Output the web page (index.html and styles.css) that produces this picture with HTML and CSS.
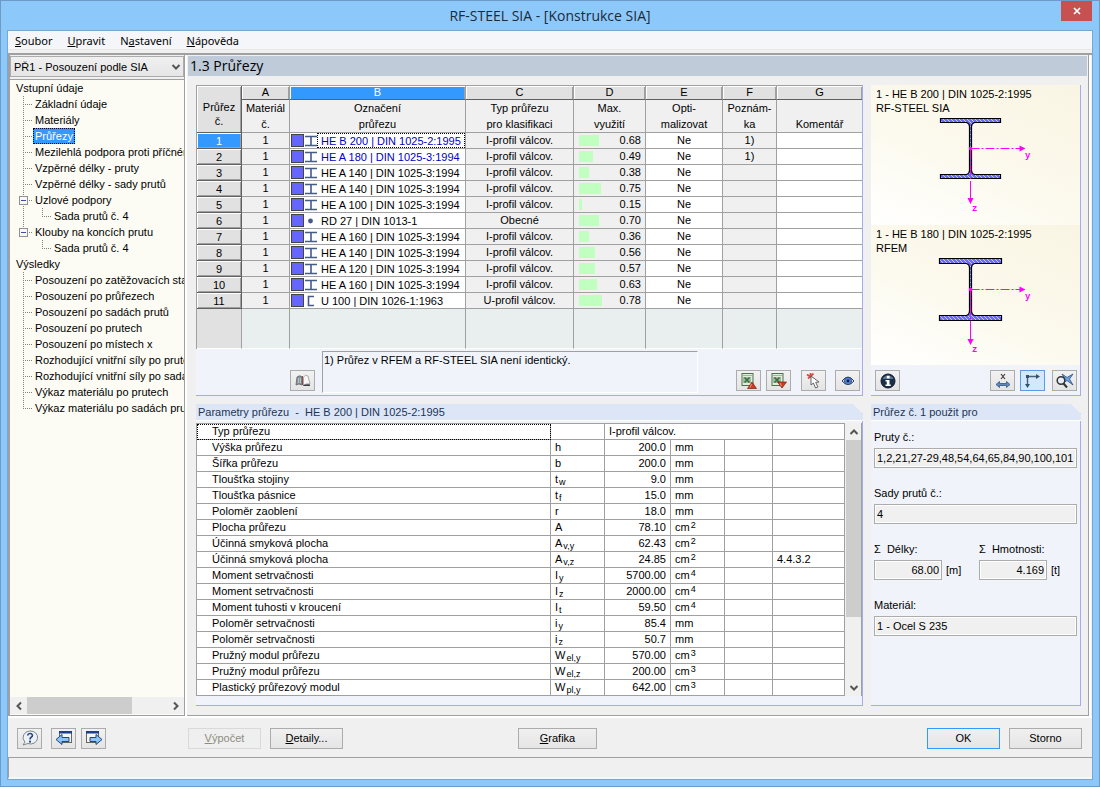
FILE: index.html
```html
<!DOCTYPE html>
<html lang="cs">
<head>
<meta charset="utf-8">
<title>RF-STEEL SIA - [Konstrukce SIA]</title>
<link rel="stylesheet" href="styles.css">
</head>
<body>
<svg class="defs" aria-hidden="true">
  <defs>
    <pattern id="hatch" width="4" height="4" patternUnits="userSpaceOnUse">
      <rect width="4" height="4" fill="#6a6aff"/>
      <path d="M-1 -1 L5 5 M-1 3 L1 5 M3 -1 L5 1" stroke="#c4c4ff" stroke-width="1"/>
    </pattern>
    <symbol id="sec-i" viewBox="0 0 12 12"><path d="M0 1.500h12M0 10.500h12M6 1v10" stroke="#465a8c" stroke-width="1.600" fill="none"/></symbol>
    <symbol id="sec-o" viewBox="0 0 12 12"><circle cx="5.500" cy="6" r="2.400" fill="#465a8c"/></symbol>
    <symbol id="sec-u" viewBox="0 0 12 12"><path d="M9 1.500H3.500V10.500H9" stroke="#465a8c" stroke-width="1.600" fill="none"/></symbol>
    <symbol id="chev-down" viewBox="0 0 10 10"><path d="M1.500 3l3.500 3.500L8.500 3" stroke="#555" stroke-width="2" fill="none"/></symbol>
    <symbol id="chev-up" viewBox="0 0 10 10"><path d="M1.500 7l3.500-3.500L8.500 7" stroke="#555" stroke-width="2" fill="none"/></symbol>
    <symbol id="chev-left" viewBox="0 0 10 10"><path d="M7 1.500L3.500 5L7 8.500" stroke="#555" stroke-width="2" fill="none"/></symbol>
    <symbol id="chev-right" viewBox="0 0 10 10"><path d="M3 1.500L6.500 5L3 8.500" stroke="#555" stroke-width="2" fill="none"/></symbol>
    <symbol id="excel" viewBox="0 0 16 16">
      <rect x="1" y="0.500" width="11" height="12" fill="#e2ecda" stroke="#4d7050"/>
      <path d="M2 2.500h9" stroke="#9dbb9d"/>
      <rect x="2" y="4" width="8" height="6" fill="#9dbd9c"/>
      <path d="M3.500 4.500l5 5M8.500 4.500l-5 5" stroke="#3c6b45" stroke-width="1.600"/>
    </symbol>
  </defs>
</svg>
<div class="window">
  <header class="titlebar">
    <h1 class="window-title">RF-STEEL SIA - [Konstrukce SIA]</h1>
    <button class="close" type="button" aria-label="Zavřít"><svg width="8" height="8" viewBox="0 0 8 8"><path d="M1 1l6 6M7 1l-6 6" stroke="#fff" stroke-width="1.700"/></svg></button>
  </header>
  <div class="client">
    <nav class="menu">
      <a href="#"><u>S</u>oubor</a><a href="#"><u>U</u>pravit</a><a href="#">N<u>a</u>stavení</a><a href="#"><u>N</u>ápověda</a>
    </nav>
    <main class="main">
      <aside class="side">
        <div class="case">
          <select aria-label="Zatěžovací případ"><option>PŘ1 - Posouzení podle SIA</option></select>
          <svg class="case-arrow" width="10" height="10"><use href="#chev-down"/></svg>
        </div>
        <div class="tree">
          <div class="root">Vstupní údaje</div>
          <ul>
            <li><a href="#">Základní údaje</a></li>
            <li><a href="#">Materiály</a></li>
            <li><a href="#" class="current">Průřezy</a></li>
            <li><a href="#">Mezilehlá podpora proti příčném</a></li>
            <li><a href="#">Vzpěrné délky - pruty</a></li>
            <li><a href="#">Vzpěrné délky - sady prutů</a></li>
            <li><button class="fold" type="button" aria-label="Sbalit"></button><a href="#">Uzlové podpory</a>
              <ul><li><a href="#">Sada prutů č. 4</a></li></ul></li>
            <li><button class="fold" type="button" aria-label="Sbalit"></button><a href="#">Klouby na koncích prutu</a>
              <ul><li><a href="#">Sada prutů č. 4</a></li></ul></li>
          </ul>
          <div class="root">Výsledky</div>
          <ul>
            <li><a href="#">Posouzení po zatěžovacích sta</a></li>
            <li><a href="#">Posouzení po průřezech</a></li>
            <li><a href="#">Posouzení po sadách prutů</a></li>
            <li><a href="#">Posouzení po prutech</a></li>
            <li><a href="#">Posouzení po místech x</a></li>
            <li><a href="#">Rozhodující vnitřní síly po prute</a></li>
            <li><a href="#">Rozhodující vnitřní síly po sada</a></li>
            <li><a href="#">Výkaz materiálu po prutech</a></li>
            <li><a href="#">Výkaz materiálu po sadách prut</a></li>
          </ul>
        </div>
        <div class="hscroll">
          <button type="button" aria-label="Doleva"><svg width="10" height="10"><use href="#chev-left"/></svg></button>
          <div class="track"><div class="thumb"></div></div>
          <button type="button" aria-label="Doprava"><svg width="10" height="10"><use href="#chev-right"/></svg></button>
        </div>
      </aside>
      <section class="content">
        <h2 class="page-title">1.3 Průřezy</h2>
        <div class="panels">
          <section class="panel sections">
            <table class="grid">
              <colgroup><col class="w-num"><col class="w-a"><col><col class="w-c"><col class="w-d"><col class="w-e"><col class="w-f"><col class="w-g"></colgroup>
              <thead>
                <tr class="letters"><th rowspan="2" class="corner">Průřez<br>č.</th><th>A</th><th class="active">B</th><th>C</th><th>D</th><th>E</th><th>F</th><th>G</th></tr>
                <tr class="names"><th>Materiál<br>č.</th><th>Označení<br>průřezu</th><th>Typ průřezu<br>pro klasifikaci</th><th>Max.<br>využití</th><th>Opti-<br>malizovat</th><th>Poznám-<br>ka</th><th>Komentář</th></tr>
              </thead>
              <tbody>
                <tr><th class="active">1</th><td>1</td><td class="desc blue focus"><div><i></i><svg><use href="#sec-i"/></svg><span>HE B 200 | DIN 1025-2:1995</span></div></td><td>I-profil válcov.</td><td class="use"><div><b style="width:20px"></b>0.68</div></td><td class="edit">Ne</td><td>1)</td><td class="edit"></td></tr>
                <tr><th>2</th><td>1</td><td class="desc blue"><div><i></i><svg><use href="#sec-i"/></svg><span>HE A 180 | DIN 1025-3:1994</span></div></td><td>I-profil válcov.</td><td class="use"><div><b style="width:14px"></b>0.49</div></td><td class="edit">Ne</td><td>1)</td><td class="edit"></td></tr>
                <tr><th>3</th><td>1</td><td class="desc"><div><i></i><svg><use href="#sec-i"/></svg><span>HE A 140 | DIN 1025-3:1994</span></div></td><td>I-profil válcov.</td><td class="use"><div><b style="width:10px"></b>0.38</div></td><td class="edit">Ne</td><td></td><td class="edit"></td></tr>
                <tr><th>4</th><td>1</td><td class="desc"><div><i></i><svg><use href="#sec-i"/></svg><span>HE A 140 | DIN 1025-3:1994</span></div></td><td>I-profil válcov.</td><td class="use"><div><b style="width:22px"></b>0.75</div></td><td class="edit">Ne</td><td></td><td class="edit"></td></tr>
                <tr><th>5</th><td>1</td><td class="desc"><div><i></i><svg><use href="#sec-i"/></svg><span>HE A 100 | DIN 1025-3:1994</span></div></td><td>I-profil válcov.</td><td class="use"><div><b style="width:3px"></b>0.15</div></td><td class="edit">Ne</td><td></td><td class="edit"></td></tr>
                <tr><th>6</th><td>1</td><td class="desc"><div><i></i><svg><use href="#sec-o"/></svg><span>RD 27 | DIN 1013-1</span></div></td><td>Obecné</td><td class="use"><div><b style="width:20px"></b>0.70</div></td><td class="edit">Ne</td><td></td><td class="edit"></td></tr>
                <tr><th>7</th><td>1</td><td class="desc"><div><i></i><svg><use href="#sec-i"/></svg><span>HE A 160 | DIN 1025-3:1994</span></div></td><td>I-profil válcov.</td><td class="use"><div><b style="width:10px"></b>0.36</div></td><td class="edit">Ne</td><td></td><td class="edit"></td></tr>
                <tr><th>8</th><td>1</td><td class="desc"><div><i></i><svg><use href="#sec-i"/></svg><span>HE A 140 | DIN 1025-3:1994</span></div></td><td>I-profil válcov.</td><td class="use"><div><b style="width:16px"></b>0.56</div></td><td class="edit">Ne</td><td></td><td class="edit"></td></tr>
                <tr><th>9</th><td>1</td><td class="desc"><div><i></i><svg><use href="#sec-i"/></svg><span>HE A 120 | DIN 1025-3:1994</span></div></td><td>I-profil válcov.</td><td class="use"><div><b style="width:16px"></b>0.57</div></td><td class="edit">Ne</td><td></td><td class="edit"></td></tr>
                <tr><th>10</th><td>1</td><td class="desc"><div><i></i><svg><use href="#sec-i"/></svg><span>HE A 160 | DIN 1025-3:1994</span></div></td><td>I-profil válcov.</td><td class="use"><div><b style="width:18px"></b>0.63</div></td><td class="edit">Ne</td><td></td><td class="edit"></td></tr>
                <tr><th>11</th><td>1</td><td class="desc"><div><i></i><svg><use href="#sec-u"/></svg><span>U 100 | DIN 1026-1:1963</span></div></td><td>U-profil válcov.</td><td class="use"><div><b style="width:23px"></b>0.78</div></td><td class="edit">Ne</td><td></td><td class="edit"></td></tr>
                <tr class="blank"><td class="blank-num"></td><td></td><td></td><td></td><td></td><td></td><td></td><td></td></tr>
              </tbody>
            </table>
            <div class="tools">
              <button class="icon library" type="button" aria-label="Knihovna průřezů"><svg width="16" height="13" viewBox="0 0 16 13"><path d="M1 11l1-8q3-2.500 5 0v8q-3-2-6 0z" fill="#8a959d" stroke="#5c6369" stroke-width=".8"/><path d="M3.500 4v5M5.500 4v5" stroke="#b9c4cc"/><path d="M8.500 3q2-3 4.500-1l2 8q-3-1-6.500 1z" fill="#f7f7f7" stroke="#999" stroke-width=".8"/><path d="M7.500 2v9" stroke="#8f4a42"/><path d="M8 11.500q3-2 7-1v1.500H8z" fill="#3c4045"/></svg></button>
              <div class="note">1) Průřez v RFEM a RF-STEEL SIA není identický.</div>
              <button class="icon" type="button" aria-label="Export do Excelu"><svg width="16" height="16" viewBox="0 0 16 16"><use href="#excel" width="16" height="16"/><path d="M6.500 15.500l4.500-6.500 4.500 6.500z" fill="#cf3a20" stroke="#7c1c10" stroke-width=".7"/><path d="M10.500 11l-1.500 3.500" stroke="#f59a80"/></svg></button>
              <button class="icon" type="button" aria-label="Import z Excelu"><svg width="16" height="16" viewBox="0 0 16 16"><use href="#excel" width="16" height="16"/><path d="M6.500 9h9l-4.500 6z" fill="#cf3a20" stroke="#7c1c10" stroke-width=".7"/><path d="M9 10l1.500 3" stroke="#f59a80"/></svg></button>
              <button class="icon pick" type="button" aria-label="Vybrat v grafice"><svg width="16" height="16" viewBox="0 0 16 16"><path d="M1 1.500l6 4M7.500 .5L2 5.500M4.500 0v5" stroke="#d94b43" stroke-width="1.700"/><path d="M5 3v9l2.400-2 2.200 5 2.300-1-2.200-4.700 3.300-.3z" fill="#fff" stroke="#555" stroke-width=".9"/></svg></button>
              <button class="icon eye" type="button" aria-label="Zobrazit"><svg width="14" height="12" viewBox="0 0 14 12"><path d="M1 6q6-8 12 0q-6 7-12 0z" fill="#d9e6fa" stroke="#333d52"/><circle cx="7" cy="6" r="3.600" fill="#5585de" stroke="#24407f" stroke-width=".8"/><circle cx="7" cy="6" r="1.400" fill="#0b1430"/></svg></button>
            </div>
          </section>

          <section class="panel preview">
            <div class="view">
              <p>1 - HE B 200 | DIN 1025-2:1995<br>RF-STEEL SIA</p>
              <svg class="profile" width="100" height="102" viewBox="0 0 100 102">
                <path d="M5.500 3.500h60v4h-26q-3 1-3 4v44q0 3 3 4h26v4h-60v-4h26q3-1 3-4v-44q0-3-3-4h-26z" fill="url(#hatch)" stroke="#000" stroke-width="1.200"/>
                <path d="M35.500 34v42" stroke="#f0f" stroke-dasharray="10 2 2 2"/><path d="M35.500 33.500h50" stroke="#f0f" stroke-dasharray="9 2 2 2"/>
                <path d="M84.500 30.500v6l6-3zM32.500 83h6l-3 6z" fill="#f0f"/><rect x="34" y="32" width="3" height="3" fill="#f0f"/><path d="M35.500 76v7" stroke="#f0f"/>
                <text x="90" y="43" class="axis">y</text><text x="37" y="96" class="axis">z</text>
              </svg>
            </div>
            <div class="view">
              <p>1 - HE B 180 | DIN 1025-2:1995<br>RFEM</p>
              <svg class="profile" width="100" height="102" viewBox="0 0 100 102">
                <path d="M4.500 3.500h62v5h-27q-3 1-3 4v43q0 4 3 5h27v5h-62v-5h27q3-1 3-5v-43q0-3-3-4h-27z" fill="url(#hatch)" stroke="#000" stroke-width="1.200"/>
                <path d="M35.500 34v42" stroke="#f0f" stroke-dasharray="10 2 2 2"/><path d="M35.500 34.500h50" stroke="#f0f" stroke-dasharray="9 2 2 2"/>
                <path d="M84.500 31.500v6l6-3zM32.500 84h6l-3 6z" fill="#f0f"/><rect x="34" y="33" width="3" height="3" fill="#f0f"/><path d="M35.500 76v8" stroke="#f0f"/>
                <text x="90" y="44" class="axis">y</text><text x="37" y="97" class="axis">z</text>
              </svg>
            </div>
            <div class="tools">
              <button class="icon info" type="button" aria-label="Informace"><svg width="16" height="16" viewBox="0 0 16 16"><circle cx="8" cy="8" r="7" fill="#1b2f4b" stroke="#0e1a2c"/><path d="M2.500 6a6 6 0 0 1 11 0" fill="#5d7799"/><rect x="6.800" y="2.800" width="2.800" height="2.600" fill="#fff"/><path d="M5.500 7h4v4.500h1.200v1.500H5.500v-1.500h1.300V8.500H5.500z" fill="#fff"/></svg></button>
              <button class="icon" type="button" aria-label="Kóty"><svg width="16" height="16" viewBox="0 0 16 16"><path d="M6 1l4 5M10 1l-4 5" stroke="#333" stroke-width="1.100"/><path d="M1 11.500l3.500-3v2h7v-2l3.500 3-3.500 3v-2h-7v2z" fill="#6288b8" stroke="#34577f" stroke-width=".8"/></svg></button>
              <button class="icon on" type="button" aria-label="Osy"><svg width="18" height="16" viewBox="0 0 18 16"><path d="M3.500 13V3.500H14" stroke="#4c5f76" stroke-width="1.400" fill="none"/><path d="M12 1l4 2.500L12 6zM1 11h5l-2.500 4z" fill="#35506e"/><rect x="2" y="2" width="3" height="3" fill="#35506e"/></svg></button>
              <button class="icon zoomall" type="button" aria-label="Zobrazit vše"><svg width="18" height="16" viewBox="0 0 18 16"><path d="M6 1l5 3.500L17 1l-3.500 5 3.500 6-6-4.500L7 10l2-4z" fill="#6ea3e0" stroke="#27507f" stroke-width=".8"/><circle cx="5" cy="7.500" r="3.800" fill="#e5eef6" stroke="#333" stroke-width="1.500"/><path d="M7.500 10.500l3.500 4" stroke="#333" stroke-width="2"/></svg></button>
            </div>
          </section>

          <section class="panel cut params">
            <h3 class="panel-title">Parametry průřezu &nbsp;-&nbsp; HE B 200 | DIN 1025-2:1995</h3>
            <div class="scrollbox">
              <table class="props">
                <colgroup><col><col class="p-sym"><col class="p-val"><col class="p-unit"><col class="p-x"><col class="p-ref"></colgroup>
                <tbody>
                  <tr><td class="focus">Typ průřezu</td><td></td><td colspan="3" class="wide">I-profil válcov.</td><td></td></tr>
                  <tr><td>Výška průřezu</td><td>h</td><td>200.0</td><td>mm</td><td></td><td></td></tr>
                  <tr><td>Šířka průřezu</td><td>b</td><td>200.0</td><td>mm</td><td></td><td></td></tr>
                  <tr><td>Tloušťka stojiny</td><td>t<sub>w</sub></td><td>9.0</td><td>mm</td><td></td><td></td></tr>
                  <tr><td>Tloušťka pásnice</td><td>t<sub>f</sub></td><td>15.0</td><td>mm</td><td></td><td></td></tr>
                  <tr><td>Poloměr zaoblení</td><td>r</td><td>18.0</td><td>mm</td><td></td><td></td></tr>
                  <tr><td>Plocha průřezu</td><td>A</td><td>78.10</td><td>cm<sup>2</sup></td><td></td><td></td></tr>
                  <tr><td>Účinná smyková plocha</td><td>A<sub>v,y</sub></td><td>62.43</td><td>cm<sup>2</sup></td><td></td><td></td></tr>
                  <tr><td>Účinná smyková plocha</td><td>A<sub>v,z</sub></td><td>24.85</td><td>cm<sup>2</sup></td><td></td><td>4.4.3.2</td></tr>
                  <tr><td>Moment setrvačnosti</td><td>I<sub>y</sub></td><td>5700.00</td><td>cm<sup>4</sup></td><td></td><td></td></tr>
                  <tr><td>Moment setrvačnosti</td><td>I<sub>z</sub></td><td>2000.00</td><td>cm<sup>4</sup></td><td></td><td></td></tr>
                  <tr><td>Moment tuhosti v kroucení</td><td>I<sub>t</sub></td><td>59.50</td><td>cm<sup>4</sup></td><td></td><td></td></tr>
                  <tr><td>Poloměr setrvačnosti</td><td>i<sub>y</sub></td><td>85.4</td><td>mm</td><td></td><td></td></tr>
                  <tr><td>Poloměr setrvačnosti</td><td>i<sub>z</sub></td><td>50.7</td><td>mm</td><td></td><td></td></tr>
                  <tr><td>Pružný modul průřezu</td><td>W<sub>el,y</sub></td><td>570.00</td><td>cm<sup>3</sup></td><td></td><td></td></tr>
                  <tr><td>Pružný modul průřezu</td><td>W<sub>el,z</sub></td><td>200.00</td><td>cm<sup>3</sup></td><td></td><td></td></tr>
                  <tr><td>Plastický průřezový modul</td><td>W<sub>pl,y</sub></td><td>642.00</td><td>cm<sup>3</sup></td><td></td><td></td></tr>
                </tbody>
              </table>
              <div class="vscroll">
                <button type="button" aria-label="Nahoru"><svg width="10" height="10"><use href="#chev-up"/></svg></button>
                <div class="track"><div class="thumb"></div></div>
                <button type="button" aria-label="Dolů"><svg width="10" height="10"><use href="#chev-down"/></svg></button>
              </div>
            </div>
          </section>

          <section class="panel cut usage">
            <h3 class="panel-title">Průřez č. 1 použit pro</h3>
            <div class="form">
              <div class="field"><label for="members">Pruty č.:</label><input id="members" readonly value="1,2,21,27-29,48,54,64,65,84,90,100,101,1"></div>
              <div class="field"><label for="sets">Sady prutů č.:</label><input id="sets" readonly value="4"></div>
              <div class="pair">
                <div class="field"><label for="len">Σ&nbsp; Délky:</label><div class="measure"><input id="len" readonly value="68.00"><span>[m]</span></div></div>
                <div class="field"><label for="mass">Σ&nbsp; Hmotnosti:</label><div class="measure"><input id="mass" readonly value="4.169"><span>[t]</span></div></div>
              </div>
              <div class="field"><label for="mat">Materiál:</label><input id="mat" readonly value="1 - Ocel S 235"></div>
            </div>
          </section>
        </div>
      </section>
    </main>
    <footer class="actions">
      <div class="nav-icons">
        <button class="icon help" type="button" aria-label="Nápověda"><svg width="18" height="16" viewBox="0 0 18 16"><path d="M9 1a7 6.500 0 1 1-2 12.500L2 15l2-3A7 6.500 0 0 1 9 1z" fill="#eef2f5" stroke="#7c878f"/><path d="M6.500 5.500Q7 3.500 9 3.500t2.500 1.800q0 1.200-1.300 2T9 9.500" stroke="#26477e" stroke-width="1.600" fill="none"/><circle cx="9" cy="11.700" r="1.100" fill="#26477e"/></svg></button>
        <button class="icon" type="button" aria-label="Předchozí"><svg width="18" height="16" viewBox="0 0 18 16"><rect x="4.500" y="1.500" width="12" height="11" fill="#f5f5f5" stroke="#666"/><rect x="4" y="1" width="13" height="2.500" fill="#1e3f86"/><path d="M1 9.500l6-5v3h7v4H7v3z" fill="#8ec4f2" stroke="#1f4683"/></svg></button>
        <button class="icon" type="button" aria-label="Další"><svg width="18" height="16" viewBox="0 0 18 16"><rect x="1.500" y="1.500" width="12" height="11" fill="#f5f5f5" stroke="#666"/><rect x="1" y="1" width="13" height="2.500" fill="#1e3f86"/><path d="M17 9.500l-6-5v3H5v4h6v3z" fill="#8ec4f2" stroke="#1f4683"/></svg></button>
      </div>
      <button class="btn" type="button" disabled><u>V</u>ýpočet</button>
      <button class="btn" type="button"><u>D</u>etaily...</button>
      <div class="middle"><button class="btn graphics" type="button"><u>G</u>rafika</button></div>
      <button class="btn default" type="submit">OK</button>
      <button class="btn" type="button">Storno</button>
    </footer>
    <div class="status"></div>
  </div>
</div>
</body>
</html>
```
FILE: styles.css
```css
* { box-sizing: border-box; }
body { margin: 0; font: 11px/16px "Liberation Sans", Arial, sans-serif; color: #000; }
a { color: inherit; text-decoration: none; }
h1, h2, h3, p, ul { margin: 0; padding: 0; font-weight: normal; }
button, input, select { font: inherit; color: inherit; margin: 0; padding: 0; border-radius: 0; }
svg { display: block; }
.defs { position: absolute; width: 0; height: 0; }

.window { min-height: 100vh; display: flex; flex-direction: column; background: #8dc8fb; border: 1px solid #6c9cc6; padding: 0 7px 7px; }
.titlebar { height: 30px; display: grid; grid-template-columns: 1fr auto 1fr; align-items: start; }
.window-title { grid-column: 2; font: 14px/30px "Open Sans", "Noto Sans", sans-serif; color: #1c2a38; }
.close { justify-self: end; width: 31px; height: 20px; border: 0; background: #c75050; display: grid; place-items: center; }

.client { flex: 1; display: flex; flex-direction: column; background: #f0f0f0; outline: 1px solid #78a8d2; }
.menu { display: flex; gap: 15px; height: 19px; padding: 0 7px; background: #f4f6f9; border-bottom: 1px solid #e8e8e8; font: 11px/19px "Noto Sans", sans-serif; }

.main { flex: 1; display: grid; grid-template-columns: 177px minmax(0, 1fr); gap: 2px; margin-top: 3px; border-top: 2px solid #a0a0a0; border-bottom: 2px solid #fff; }
.side { display: flex; flex-direction: column; min-width: 0; border: 1px solid #a0a0a0; border-width: 0 1px 1px 2px; box-shadow: 2px 0 #fff; background: #fcfcf4; }
.case { position: relative; padding: 1px 0 2px; background: #f0f0f0; border-bottom: 1px solid #a0a0a0; }
.case select { display: block; width: 100%; height: 21px; appearance: none; border: 1px solid #acacac; background: linear-gradient(#f0f0f0, #e5e5e5); padding: 0 3px; }
.case-arrow { position: absolute; right: 3px; top: 7px; pointer-events: none; }
.tree { flex: 1; overflow: hidden; white-space: nowrap; }
.root { padding-left: 6px; height: 16px; }
.tree ul { list-style: none; padding-left: 13px; }
.tree ul ul { padding-left: 7px; }
.tree li {
  padding-left: 12px;
  background-image: repeating-linear-gradient(#808080 0 1px, transparent 1px 2px), repeating-linear-gradient(90deg, #808080 0 1px, transparent 1px 2px);
  background-size: 1px 100%, 9px 1px; background-position: 0 0, 0 8px; background-repeat: no-repeat;
}
.tree li:last-child { background-size: 1px 8px, 9px 1px; }
.tree a { display: inline-block; height: 16px; }
.tree a.current { background: #3399ff; color: #fff; outline: 1px dotted #000; outline-offset: -1px; margin-left: -2px; padding: 0 2px; }
.fold { width: 9px; height: 9px; margin: 4px 7px 3px -16px; border: 1px solid #919191; background: linear-gradient(#3b50a8, #3b50a8) center / 5px 1px no-repeat, #f8f8f8; vertical-align: top; }

.hscroll { display: flex; height: 17px; background: #f0f0f0; margin-bottom: 1px; }
.hscroll button, .vscroll button { border: 0; background: #f0f0f0; display: grid; place-items: center; width: 17px; height: 17px; flex: none; }
.track { flex: 1; }
.hscroll .thumb { width: 75%; height: 100%; background: #cdcdcd; }
.vscroll .thumb { width: 100%; height: 74%; background: #cdcdcd; }

.content { display: flex; flex-direction: column; min-width: 0; border: 1px solid #a0a0a0; border-width: 0 1px 1px 0; margin-right: 3px; box-shadow: 2px 0 #fff; padding: 1px 1px 9px 1px; }
.page-title { height: 20px; padding-left: 2px; background: #bfcbd9; font: 14px/20px "Open Sans", "Noto Sans", sans-serif; }
.panels { flex: 1; display: grid; grid-template-columns: minmax(0, 1fr) 210px; grid-template-rows: auto 1fr; gap: 8px; padding: 9px 6px 0 8px; }
.panel { display: flex; flex-direction: column; min-width: 0; background: #f0f4fa; border: 1px solid #a9a9ee; border-width: 0 1px 1px 0; }
.cut { clip-path: polygon(0 0, calc(100% - 10px) 0, 100% 10px, 100% 100%, 0 100%); }
.panel-title { height: 17px; padding-left: 2px; line-height: 17px; font-size: 11px; background: #dce6f6; color: #1d3557; border-bottom: 1px solid #fff; margin-right: -1px; }

table { border-spacing: 0; table-layout: fixed; width: 100%; border-left: 1px solid #a0a0a0; border-top: 1px solid #a0a0a0; }
th, td { padding: 0; font-weight: normal; border-right: 1px solid #a0a0a0; border-bottom: 1px solid #a0a0a0; height: 16px; line-height: 15px; white-space: nowrap; text-align: center; }
.w-num { width: 45px; } .w-a { width: 48px; } .w-c { width: 108px; } .w-d { width: 72px; } .w-e { width: 77px; } .w-f { width: 54px; } .w-g { width: 85px; }
.grid th { background: #e1e1e1; }
.grid .corner { line-height: 14px; border-right-color: #606060; padding-top: 9px; }
.letters th { height: 14px; line-height: 13px; border-bottom-color: #606060; box-shadow: inset 1px 1px #fff, inset -1px 0 #a0a0a0; }
.grid .names th { background: #f0f0f0; height: 33px; line-height: 16px; vertical-align: bottom; }
.grid tbody th { box-shadow: inset 1px 1px #fff, inset -1px -1px #a0a0a0; border-color: #606060; line-height: 14px; }
.grid th.active { background: #3399ff; color: #fff; }
.grid td { background: #f0f0f0; }
.grid tr td:last-child, .grid tr th:last-child { border-right: 0; }
.grid td.edit, .grid td.desc { background: #fff; }
.desc div { display: flex; align-items: center; height: 15px; }
.desc i { width: 13px; height: 13px; margin: 0 1px; background: #6666ff; border: 1px solid #444; }
.desc svg { width: 12px; height: 12px; }
.desc span { flex: 1; text-align: left; height: 15px; padding-left: 3px; border: 1px dotted transparent; line-height: 14px; }
.desc.blue { color: #0000c8; }
.desc.focus span { border-color: #000; }
.use div { display: flex; justify-content: space-between; padding: 0 4px 0 5px; }
.use b { height: 11px; margin-top: 2px; background: #c0ffc0; }
.grid .blank td { height: 40px; background: #e8efee; border-bottom-color: #fff; }
.grid .blank .blank-num { background: #e1e1e1; }

.tools { display: flex; align-items: flex-end; padding: 2px 2px 4px; }
.icon { width: 25px; height: 21px; flex: none; display: grid; place-items: center; border: 1px solid #acacac; background: linear-gradient(#f2f2f2, #e4e4e4); }
.icon + .icon { margin-left: 5px; }
.library { margin-left: 92px; }
.note { flex: 1; min-width: 0; align-self: stretch; height: 42px; margin: 0 38px -2px 7px; padding-left: 1px; border: 1px solid #fff; border-left-color: #a0a0a0; border-top-color: #a0a0a0; }
.tools .pick { margin-left: 10px; }
.tools .eye { margin-left: 9px; }
.preview .tools { padding: 4px 3px 4px 4px; margin-top: auto; }
.preview .info { margin-right: auto; }
.preview .zoomall { margin-left: 7px; }
.icon.on { border-color: #569de5; background: #d3e8fc; }
.view { height: 140px; padding: 2px 0 0 5px; background: linear-gradient(205deg, #f9f5e3, #fcfaee 55%, #fff); }
.view p { line-height: 14px; }
.profile { margin-left: 59px; }
.axis { font: bold 9px "Liberation Mono", monospace; fill: #f0f; }

.scrollbox { display: flex; margin-top: 2px; background: #f0f0f0; }
.props { flex: 1; min-width: 0; background: #fff; }
.p-sym { width: 54px; } .p-val { width: 66px; } .p-unit { width: 54px; } .p-x { width: 48px; } .p-ref { width: 72px; }
.props td { text-align: left; padding-left: 4px; }
.props td:first-child { padding-left: 15px; }
.props td:nth-child(3) { text-align: right; padding: 0 4px 0 0; }
.props td.wide { text-align: left; padding-left: 4px; }
.props td.focus { outline: 1px dotted #000; outline-offset: -1px; }
sub, sup { font-size: 9px; line-height: 0; margin-left: 1px; }
sub { vertical-align: -2px; }
sup { vertical-align: 3px; }
.vscroll { width: 17px; display: flex; flex-direction: column; border-right: 1px solid #a0a0a0; padding-left: 1px; }
.vscroll button { width: 15px; }

.form { display: flex; flex-direction: column; gap: 17px; padding: 8px 3px 0; }
.field { display: flex; flex-direction: column; gap: 3px; }
.field input { width: 100%; height: 20px; border: 1px solid #acacac; background: #f0f0f0; padding: 0 2px; box-shadow: inset 0 0 0 1px #fff; }
.pair { display: grid; grid-template-columns: 105px 1fr; }
.measure { display: flex; align-items: center; gap: 4px; }
.field .measure input { width: 68px; text-align: right; }

.actions { display: flex; align-items: center; gap: 9px; height: 39px; padding: 1px 10px 0 9px; }
.nav-icons { display: flex; width: 162px; }
.nav-icons .help { margin-right: 4px; }
.btn { width: 73px; height: 21px; border: 1px solid #acacac; background: linear-gradient(#f0f0f0, #e5e5e5); }
.btn:disabled { color: #8d8d80; border-color: #d9d9d9; background: #efefef; }
.btn.default { border-color: #3399ff; }
.middle { flex: 1; padding-left: 166px; }
.graphics { width: 79px; }
.status { height: 22px; border: 1px solid #a0a0a0; border-right: 0; border-bottom: 2px solid #f8f8f8; }
```
